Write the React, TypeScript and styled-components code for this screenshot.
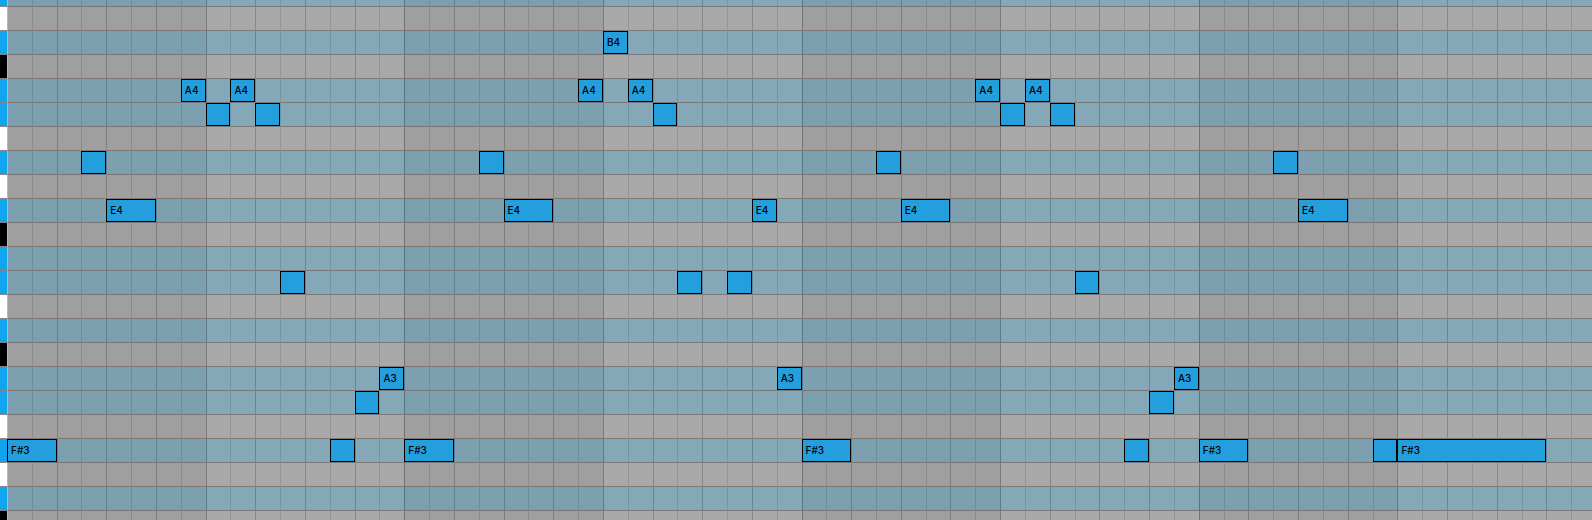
import React from "react";
import styled, { createGlobalStyle } from "styled-components";

const STEPS = 64;
const BAR = 8;

type KeyKind = "scale" | "white" | "black";
type NoteSpec = [start: number, length: number];
interface Pitch {
  name: string;
  kind: KeyKind;
  notes?: NoteSpec[];
}

const pitches: Pitch[] = [
  { name: "C#5", kind: "scale" },
  { name: "C5", kind: "white" },
  { name: "B4", kind: "scale", notes: [[24, 1]] },
  { name: "A#4", kind: "black" },
  { name: "A4", kind: "scale", notes: [[7, 1], [9, 1], [23, 1], [25, 1], [39, 1], [41, 1]] },
  { name: "G#4", kind: "scale", notes: [[8, 1], [10, 1], [26, 1], [40, 1], [42, 1]] },
  { name: "G4", kind: "white" },
  { name: "F#4", kind: "scale", notes: [[3, 1], [19, 1], [35, 1], [51, 1]] },
  { name: "F4", kind: "white" },
  { name: "E4", kind: "scale", notes: [[4, 2], [20, 2], [30, 1], [36, 2], [52, 2]] },
  { name: "D#4", kind: "black" },
  { name: "D4", kind: "scale" },
  { name: "C#4", kind: "scale", notes: [[11, 1], [27, 1], [29, 1], [43, 1]] },
  { name: "C4", kind: "white" },
  { name: "B3", kind: "scale" },
  { name: "A#3", kind: "black" },
  { name: "A3", kind: "scale", notes: [[15, 1], [31, 1], [47, 1]] },
  { name: "G#3", kind: "scale", notes: [[14, 1], [46, 1]] },
  { name: "G3", kind: "white" },
  { name: "F#3", kind: "scale", notes: [[0, 2], [13, 1], [16, 2], [32, 2], [45, 1], [48, 2], [55, 1], [56, 6]] },
  { name: "F3", kind: "white" },
  { name: "E3", kind: "scale" },
  { name: "D#3", kind: "black" },
];

// A three-character name needs at least two steps of room.
const labelFor = (name: string, length: number) =>
  name.length <= 2 || length > 1 ? name : null;

const keyColors: Record<KeyKind, string> = {
  scale: "#11a4ef",
  white: "#ffffff",
  black: "#000000",
};

const laneColor = (inScale: boolean, light: boolean) => {
  if (inScale) return light ? "#85a8b8" : "#7da0b0";
  return light ? "#a9a9a9" : "#9f9f9f";
};

const lineColor = (step: number) => {
  if (step === 0) return "#6fd3ee";
  if (step % BAR === 0) return "rgba(0, 0, 0, 0.28)";
  return step % 2 === 0 ? "rgba(0, 0, 0, 0.2)" : "rgba(0, 0, 0, 0.12)";
};

const GlobalStyle = createGlobalStyle`
  body {
    margin: 0;
    overflow: hidden;
    background: #a9a9a9;
  }
`;

const Roll = styled.main`
  height: 100vh;
  overflow: hidden;
  font: 500 10px/13px Inter, sans-serif;
`;

const Rows = styled.div`
  margin-top: -17px;
`;

const Row = styled.div`
  display: flex;
  height: 24px;
`;

const Key = styled.div<{ $kind: KeyKind }>`
  flex: none;
  box-sizing: border-box;
  width: 7px;
  border-bottom: 1px solid #858585;
  background: ${({ $kind }) => keyColors[$kind]};
`;

const Lane = styled.div`
  flex: none;
  display: grid;
  grid-template-columns: repeat(${STEPS}, minmax(0, 1fr));
  grid-template-rows: 23px 1px;
  width: calc(100% - 3px);
`;

const Cell = styled.div<{ $step: number; $inScale: boolean }>`
  grid-row: 1 / 3;
  grid-column: ${({ $step }) => $step + 1};
  border-left: 1px solid ${({ $step }) => lineColor($step)};
  border-bottom: 1px solid rgba(118, 104, 98, 0.75);
  background: ${({ $step, $inScale }) =>
    laneColor($inScale, Math.floor($step / BAR) % 2 === 1)};
`;

const Note = styled.button<{ $start: number; $length: number }>`
  grid-row: 1;
  grid-column: ${({ $start, $length }) => `${$start + 1} / span ${$length}`};
  z-index: 1;
  box-sizing: border-box;
  min-width: 0;
  margin: 0;
  padding: 0 0 0 3px;
  border: 1px solid #000;
  border-radius: 0;
  background: #249fde;
  color: #000;
  font: inherit;
  text-align: left;
`;

const steps = Array.from({ length: STEPS }, (_, i) => i);

export default function App() {
  return (
    <>
      <GlobalStyle />
      <Roll>
        <Rows>
          {pitches.map(({ name, kind, notes = [] }) => (
            <Row key={name}>
              <Key $kind={kind} />
              <Lane>
                {steps.map((step) => (
                  <Cell key={step} $step={step} $inScale={kind === "scale"} />
                ))}
                {notes.map(([start, length]) => (
                  <Note key={start} $start={start} $length={length} aria-label={name}>
                    {labelFor(name, length)}
                  </Note>
                ))}
              </Lane>
            </Row>
          ))}
        </Rows>
      </Roll>
    </>
  );
}
